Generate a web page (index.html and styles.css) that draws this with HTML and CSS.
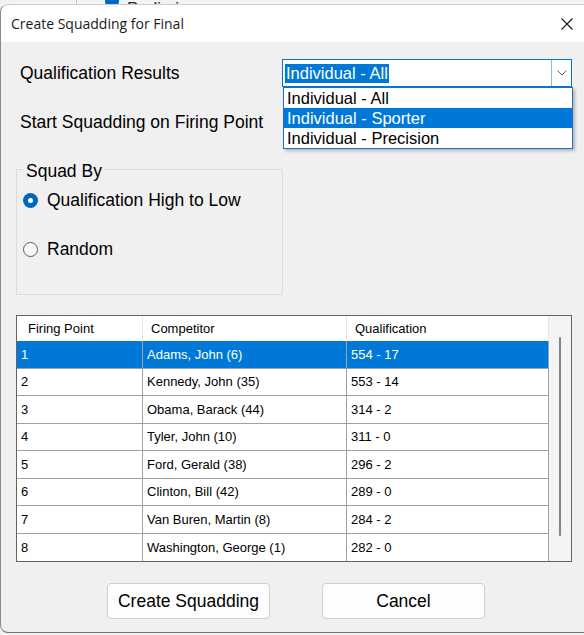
FILE: index.html
```html
<!DOCTYPE html>
<html lang="en">
<head>
    <meta charset="UTF-8">
    <title>Create Squadding for Final</title>
    <link rel="stylesheet" href="styles.css">
</head>
<body>
    <div class="backdrop">
        <div class="behind">
            <span class="behind-radio"></span>
            <span class="behind-text">Preliminary</span>
        </div>
    </div>

    <div class="dialog">
        <div class="titlebar">
            <span class="title">Create Squadding for Final</span>
            <span class="close">
                <svg width="12" height="12" viewBox="0 0 12 12">
                    <path d="M0.5 0.5 L11.5 11.5 M11.5 0.5 L0.5 11.5" stroke="#1a1a1a" stroke-width="1.1" fill="none"/>
                </svg>
            </span>
        </div>

        <div class="content">
            <div class="field-row">
                <label class="field-label">Qualification Results</label>
                <div class="combo">
                    <div class="combo-value"><span class="combo-selected">Individual - All</span></div>
                    <div class="combo-arrow">
                        <svg width="10" height="6" viewBox="0 0 10 6">
                            <path d="M0.5 0.5 L5 5 L9.5 0.5" stroke="#606060" stroke-width="1" fill="none"/>
                        </svg>
                    </div>
                    <ul class="combo-list">
                        <li>Individual - All</li>
                        <li class="active">Individual - Sporter</li>
                        <li>Individual - Precision</li>
                    </ul>
                </div>
            </div>

            <div class="field-row second">
                <label class="field-label">Start Squadding on Firing Point</label>
            </div>

            <div class="group">
                <div class="group-title">Squad By</div>
                <div class="radio-row first">
                    <span class="radio checked"></span>
                    <span>Qualification High to Low</span>
                </div>
                <div class="radio-row">
                    <span class="radio"></span>
                    <span>Random</span>
                </div>
            </div>

            <div class="grid">
                <div class="rows">
                    <div class="row header">
                        <div class="cell">Firing Point</div>
                        <div class="cell">Competitor</div>
                        <div class="cell">Qualification</div>
                    </div>
                    <div class="row selected">
                        <div class="cell">1</div>
                        <div class="cell">Adams, John (6)</div>
                        <div class="cell">554 - 17</div>
                    </div>
                    <div class="row">
                        <div class="cell">2</div>
                        <div class="cell">Kennedy, John (35)</div>
                        <div class="cell">553 - 14</div>
                    </div>
                    <div class="row">
                        <div class="cell">3</div>
                        <div class="cell">Obama, Barack (44)</div>
                        <div class="cell">314 - 2</div>
                    </div>
                    <div class="row">
                        <div class="cell">4</div>
                        <div class="cell">Tyler, John (10)</div>
                        <div class="cell">311 - 0</div>
                    </div>
                    <div class="row">
                        <div class="cell">5</div>
                        <div class="cell">Ford, Gerald (38)</div>
                        <div class="cell">296 - 2</div>
                    </div>
                    <div class="row">
                        <div class="cell">6</div>
                        <div class="cell">Clinton, Bill (42)</div>
                        <div class="cell">289 - 0</div>
                    </div>
                    <div class="row">
                        <div class="cell">7</div>
                        <div class="cell">Van Buren, Martin (8)</div>
                        <div class="cell">284 - 2</div>
                    </div>
                    <div class="row last">
                        <div class="cell">8</div>
                        <div class="cell">Washington, George (1)</div>
                        <div class="cell">282 - 0</div>
                    </div>
                </div>
                <div class="scroll">
                    <div class="thumb"></div>
                </div>
            </div>

            <div class="actions">
                <button class="btn">Create Squadding</button>
                <button class="btn">Cancel</button>
            </div>
        </div>
    </div>
</body>
</html>
```

FILE: styles.css
```css
* {
    box-sizing: border-box;
}
body {
    margin: 0;
    background-color: #f3f3f3;
    font-family: 'Liberation Sans', Arial, sans-serif;
    color: #000;
    overflow: hidden;
}

/* window behind the dialog */
.backdrop {
    height: 4px;
    overflow: hidden;
    padding-left: 76px;
}
.behind {
    height: 4px;
    border-left: 1px solid #c4c4c4;
    display: flex;
    align-items: flex-end;
    padding-left: 28px;
}
.behind-radio {
    width: 14px;
    height: 14px;
    border-radius: 50%;
    background-color: #0067c0;
    margin-bottom: -4px;
}
.behind-text {
    font-size: 17px;
    margin-left: 8px;
    line-height: 20px;
    margin-bottom: -15px;
    color: #222;
}

.dialog {
    width: 584px;
    background-color: #f0f0f0;
    border-left: 1px solid #8a8a8a;
    border-bottom: 1px solid #6e6e6e;
    border-top: 1px solid #cfcfcf;
    border-radius: 8px 0 0 8px;
    overflow: visible;
}
.titlebar {
    height: 37px;
    background-color: #fff;
    border-top-left-radius: 8px;
    display: flex;
    align-items: center;
    justify-content: space-between;
    padding: 0 11px 0 10px;
}
.title {
    font-family: 'Open Sans', 'Noto Sans', sans-serif;
    font-size: 14px;
    color: #1a1a1a;
}
.close {
    display: flex;
}

.content {
    padding: 0 0 13px 15px;
}
.field-row {
    display: flex;
    align-items: center;
    height: 28px;
    margin-top: 17px;
}
.field-row.second {
    margin-top: 21px;
}
.field-label {
    width: 266px;
    padding-left: 4px;
    font-size: 17.5px;
}

/* combobox */
.combo {
    position: relative;
    width: 290px;
    height: 28px;
    border: 1px solid #0078d7;
    background-color: #fff;
    display: flex;
}
.combo-value {
    flex: 1;
    display: flex;
    align-items: center;
    padding-left: 2px;
}
.combo-selected {
    background-color: #0078d7;
    color: #fff;
    font-size: 16.5px;
    line-height: 19px;
    padding: 0 1px;
}
.combo-arrow {
    width: 20px;
    border-left: 1px solid #8fb6e0;
    display: flex;
    align-items: center;
    justify-content: center;
}
.combo-list {
    position: absolute;
    top: calc(100% + 1px);
    left: 0;
    width: 290px;
    margin: 0;
    padding: 0;
    list-style: none;
    background-color: #fff;
    border: 1px solid #1c6fc4;
    box-shadow: 2px 2px 3px rgba(0, 0, 0, 0.25);
    z-index: 2;
}
.combo-list li {
    height: 20px;
    line-height: 20px;
    padding-left: 3px;
    font-size: 16.5px;
}
.combo-list li.active {
    background-color: #0078d7;
    color: #fff;
}

/* group box */
.group {
    width: 267px;
    height: 126px;
    margin-top: 33px;
    border: 1px solid #dcdcdc;
}
.group-title {
    display: table;
    margin: -9px 0 0 7px;
    padding: 0 2px;
    line-height: 20px;
    font-size: 17.5px;
    background-color: #f0f0f0;
}
.radio-row {
    display: flex;
    align-items: center;
    height: 28px;
    padding-left: 6px;
    gap: 9px;
    margin-top: 21px;
    font-size: 17.5px;
}
.radio-row.first {
    margin-top: 5px;
}
.radio {
    width: 15px;
    height: 15px;
    border-radius: 50%;
    border: 1.5px solid #5c5c5c;
    background-color: #f7f7f7;
    display: flex;
    align-items: center;
    justify-content: center;
}
.radio.checked {
    border: none;
    background-color: #0067c0;
}
.radio.checked::after {
    content: '';
    width: 5px;
    height: 5px;
    border-radius: 50%;
    background-color: #fff;
}

/* data grid */
.grid {
    width: 556px;
    height: 247px;
    margin-top: 20px;
    border: 1px solid #646464;
    display: flex;
    font-size: 13px;
}
.rows {
    width: 532px;
}
.row {
    display: grid;
    grid-template-columns: 126px 204px 202px;
    height: 27.5px;
    border-bottom: 1px solid #a0a0a0;
    background-color: #fff;
}
.row.last {
    border-bottom: none;
}
.cell {
    display: flex;
    align-items: center;
    padding-left: 4px;
    border-right: 1px solid #a0a0a0;
}
.row.header {
    height: 25px;
    border-bottom: none;
}
.row.header .cell {
    padding-left: 8px;
    border-right-color: #e5e5e5;
}
.row.header .cell:first-child {
    padding-left: 11px;
}
.row.selected {
    background-color: #0078d7;
    color: #fff;
}
.scroll {
    flex: 1;
    background-color: #f4f4f4;
    padding: 21px 0 0 10px;
}
.thumb {
    width: 2px;
    height: 199px;
    border-radius: 1px;
    background-color: #858585;
}

/* buttons */
.actions {
    display: flex;
    gap: 52px;
    margin-top: 21px;
    padding-left: 91px;
}
.btn {
    width: 163px;
    height: 36px;
    background-color: #fdfdfd;
    border: 1px solid #d0d0d0;
    border-radius: 4px;
    font-family: 'Liberation Sans', Arial, sans-serif;
    font-size: 17.5px;
    color: #000;
}
```
